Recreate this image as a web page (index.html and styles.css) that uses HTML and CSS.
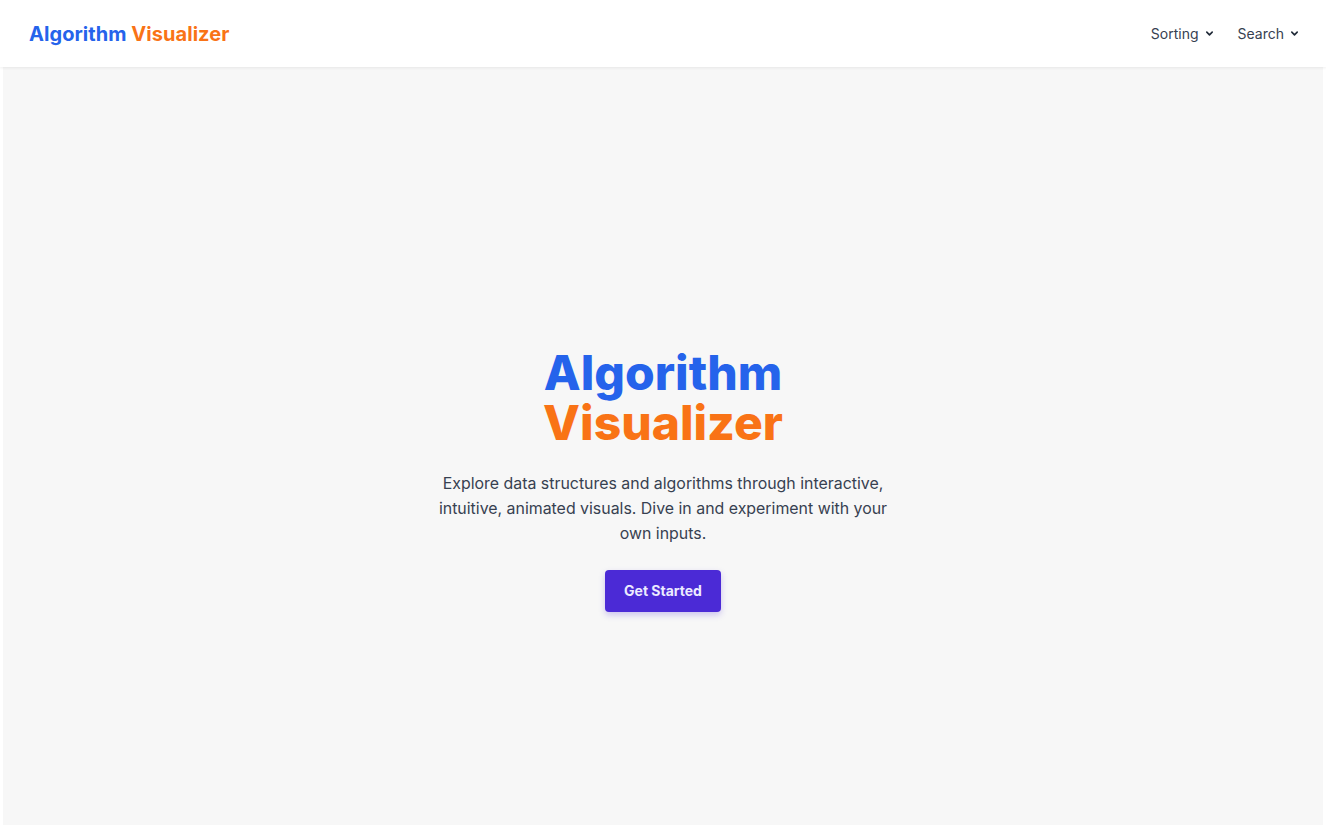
FILE: index.html
```html
<!DOCTYPE html>
<html lang="en">
<head>
<meta charset="utf-8">
<title>Algorithm Visualizer</title>
<link rel="stylesheet" href="styles.css">
</head>
<body>
<header class="topbar">
  <a class="brand" href="#"><span class="blue">Algorithm</span> <span class="orange">Visualizer</span></a>
  <nav class="nav">
    <button class="nav-item">Sorting
      <svg class="chev" viewBox="0 0 10 10" width="9" height="9"><path d="M2 3.5 L5 6.5 L8 3.5" fill="none" stroke="currentColor" stroke-width="1.8" stroke-linecap="round" stroke-linejoin="round"/></svg>
    </button>
    <button class="nav-item">Search
      <svg class="chev" viewBox="0 0 10 10" width="9" height="9"><path d="M2 3.5 L5 6.5 L8 3.5" fill="none" stroke="currentColor" stroke-width="1.8" stroke-linecap="round" stroke-linejoin="round"/></svg>
    </button>
  </nav>
</header>
<main class="hero">
  <div class="hero-inner">
    <h1 class="hero-title"><span class="blue line">Algorithm</span><span class="orange line">Visualizer</span></h1>
    <p class="hero-text">Explore data structures and algorithms through interactive, intuitive, animated visuals. Dive in and experiment with your own inputs.</p>
    <button class="cta">Get Started</button>
  </div>
</main>
</body>
</html>
```
FILE: styles.css
```css
* { box-sizing: border-box; }
html, body { margin: 0; padding: 0; background: #ffffff; }
body {
  font-family: Inter, "Noto Sans", Arial, sans-serif;
  color: #374151;
}
.blue { color: #2563eb; }
.orange { color: #f97316; }

.topbar {
  height: 67px;
  display: flex;
  align-items: center;
  justify-content: space-between;
  padding: 0 27px 0 29px;
  background: #ffffff;
  box-shadow: 0 1px 3px rgba(0,0,0,0.07);
  position: relative;
  z-index: 1;
}
.brand {
  font-size: 20px;
  font-weight: 700;
  text-decoration: none;
  letter-spacing: 0.05px;
}
.nav { display: flex; gap: 24px; }
.nav-item {
  background: none;
  border: 0;
  padding: 0;
  font-family: inherit;
  font-size: 14px;
  color: #374151;
  display: flex;
  align-items: center;
  gap: 6px;
  cursor: pointer;
}
.chev { color: #1f2937; }

.hero {
  margin: 0 3px;
  min-height: 100vh;
  background: #f7f7f7;
  display: flex;
  align-items: center;
  justify-content: center;
}
.hero-inner {
  display: flex;
  flex-direction: column;
  align-items: center;
  text-align: center;
}
.hero-title {
  margin: 0;
  font-size: 48px;
  line-height: 50px;
  font-weight: 800;
  letter-spacing: 0;
  display: flex;
  flex-direction: column;
  align-items: center;
}
.hero-title .line { display: block; height: 50px; }
.hero-text {
  margin: 23px 0 0;
  max-width: 458px;
  font-size: 15.9px;
  line-height: 25px;
  color: #374151;
}
.cta {
  margin-top: 24px;
  background: #4b2ad6;
  color: #ecebff;
  border: 0;
  border-radius: 4px;
  padding: 12px 19px;
  font-family: inherit;
  font-size: 14px;
  line-height: 18px;
  font-weight: 700;
  box-shadow: 0 3px 6px rgba(75,42,214,0.25);
  cursor: pointer;
}
```
